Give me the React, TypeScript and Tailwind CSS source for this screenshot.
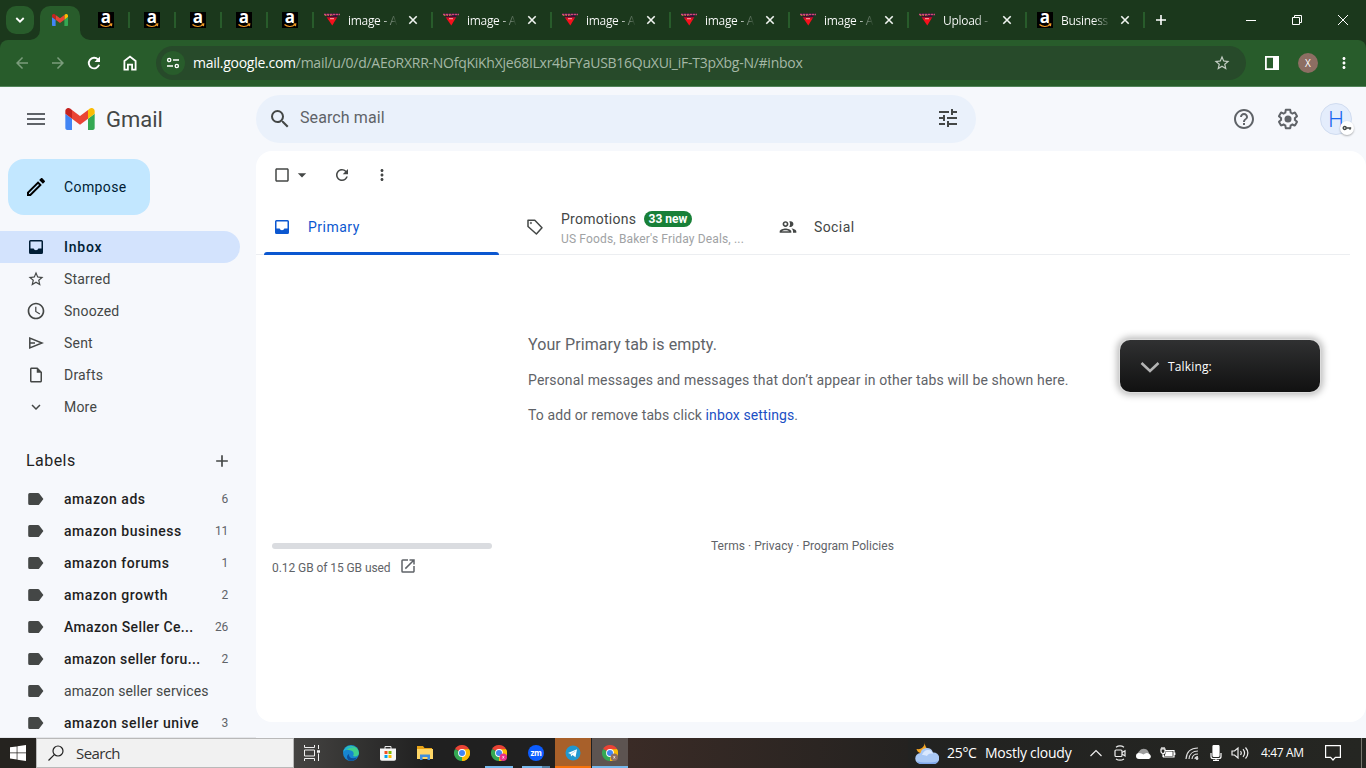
import type { ReactNode } from "react"
import {
  MdAccessTime,
  MdAdd,
  MdArrowBack,
  MdArrowDropDown,
  MdArrowForward,
  MdCheckBoxOutlineBlank,
  MdExpandMore,
  MdHelpOutline,
  MdMenu,
  MdMoreVert,
  MdOpenInNew,
  MdOutlineCreate,
  MdOutlineInsertDriveFile,
  MdOutlinePeople,
  MdRefresh,
  MdSearch,
  MdStarBorder,
  MdTune,
} from "react-icons/md"

const gmailFont = "font-['Roboto','Inter',sans-serif]"
const systemFont = "font-['Open_Sans','Noto_Sans',sans-serif]"

function GmailLogo({ className }: { className: string }) {
  return (
    <svg viewBox="52 42 88 66" className={className}>
      <path fill="#4285f4" d="M58 108h14V74L52 59v43c0 3.32 2.69 6 6 6" />
      <path fill="#34a853" d="M120 108h14c3.32 0 6-2.69 6-6V59l-20 15" />
      <path fill="#fbbc04" d="M120 48v26l20-15v-8c0-7.42-8.47-11.65-14.4-7.2" />
      <path fill="#ea4335" d="M72 74V48l24 18 24-18v26L96 92" />
      <path fill="#c5221f" d="M52 51v8l20 15V48l-5.6-4.2c-5.94-4.45-14.4-.22-14.4 7.2" />
    </svg>
  )
}

function AmazonIcon() {
  return (
    <span className="relative flex h-4 w-4 shrink-0 justify-center bg-black font-['Open_Sans',sans-serif] text-[17px] leading-[9px] font-bold text-white">
      a
      <svg viewBox="0 0 16 16" className="absolute inset-0 h-4 w-4" fill="none" stroke="#f59b23" strokeWidth="1.200">
        <path d="M2.500 12.500c3 2.600 7.500 2.600 10.500.3M11.500 12.200l2.200-.2-.3 2.100" />
      </svg>
    </span>
  )
}

function TriangleIcon() {
  return (
    <svg viewBox="0 0 16 16" className="h-4 w-4 shrink-0">
      <path fill="#1b1030" d="M1 1.500h14L10.500 9h-5z" />
      <path fill="none" stroke="#d0487a" strokeWidth="1.600" strokeDasharray="2.500 .5" d="M0 2.500h16" />
      <path fill="none" stroke="#c98a3a" strokeWidth=".8" strokeDasharray="1.500 1" d="M1 3.500h8" />
      <path fill="#a01030" d="M2.500 4.800h11l-1.300 2.500H3.800z" />
      <path fill="#f5101c" d="M3.500 6.500h9L8.300 13.500z" />
      <path fill="#ffb0b0" d="M6 6.200h4v1H6z" />
    </svg>
  )
}

function CloseIcon() {
  return (
    <svg viewBox="0 0 10 10" className="h-2.5 w-2.5 shrink-0" stroke="#f1f5f1" strokeWidth="1.600">
      <path d="M1.300 1.300l7.400 7.400M8.700 1.300L1.300 8.700" />
    </svg>
  )
}

const tabs = [
  { title: "image - A", icon: "triangle", width: "w-[119px]" },
  { title: "image - A", icon: "triangle", width: "w-[119px]" },
  { title: "image - A", icon: "triangle", width: "w-[119px]" },
  { title: "image - A", icon: "triangle", width: "w-[119px]" },
  { title: "image - A", icon: "triangle", width: "w-[119px]" },
  { title: "Upload -", icon: "triangle", width: "w-[118px]" },
  { title: "Business", icon: "amazon", width: "w-[118px]" },
]

function TabStrip() {
  return (
    <div className="flex h-10 bg-[#1b381c]">
      <div className="mt-1.5 ml-1.5 flex h-7 w-7 items-center justify-center rounded-[10px] bg-[#285c2b]">
        <svg viewBox="0 0 10 10" className="h-2.5 w-2.5" fill="none" stroke="#fff" strokeWidth="1.800">
          <path d="M1.300 3l3.700 3.700L8.700 3" />
        </svg>
      </div>
      <div className="relative mt-1.5 mr-1 ml-1.5 flex w-10 items-center justify-center rounded-t-[10px] bg-[#285c2b] pb-1.5">
        <GmailLogo className="h-3 w-4" />
        <svg viewBox="0 0 10 10" className="absolute bottom-0 -left-2.5 h-2.5 w-2.5" fill="#285c2b">
          <path d="M10 0v10H0A10 10 0 0 0 10 0z" />
        </svg>
        <svg viewBox="0 0 10 10" className="absolute -right-2.5 bottom-0 h-2.5 w-2.5" fill="#285c2b">
          <path d="M0 0v10h10A10 10 0 0 1 0 0z" />
        </svg>
      </div>
      {[0, 1, 2, 3, 4].map((i) => (
        <div key={i} className="flex w-[46px] items-center justify-between pl-3.5">
          <AmazonIcon />
          <span className="h-4 w-0.5 bg-[#285c2b]" />
        </div>
      ))}
      {tabs.map((tab, i) => (
        <div key={i} className={`flex items-center pl-2.5 ${tab.width}`}>
          {tab.icon === "amazon" ? <AmazonIcon /> : <TriangleIcon />}
          <span className="mt-0.5 ml-2 w-[50px] bg-linear-to-r from-white from-65% to-transparent to-100% bg-clip-text text-[12px] tracking-[-0.3px] whitespace-nowrap text-transparent">
            {tab.title}
          </span>
          <span className="mr-[13px] ml-auto">
            <CloseIcon />
          </span>
          <span className="h-4 w-0.5 bg-[#285c2b]" />
        </div>
      ))}
      <div className="flex w-8 items-center justify-center text-white">
        <svg viewBox="0 0 12 12" className="h-3 w-3" stroke="currentColor" strokeWidth="1.600">
          <path d="M6 1v10M1 6h10" />
        </svg>
      </div>
      <div className="ml-auto flex text-white">
        <div className="flex w-[46px] items-center justify-center">
          <span className="h-px w-2.5 bg-white" />
        </div>
        <div className="flex w-[46px] items-center justify-center">
          <svg viewBox="0 0 10 10" className="h-2.5 w-2.5" fill="none" stroke="currentColor">
            <path d="M.5 2.500h7v7h-7zM2.500 2.500v-2h7v7h-2" />
          </svg>
        </div>
        <div className="flex w-[46px] items-center justify-center">
          <svg viewBox="0 0 10 10" className="h-2.5 w-2.5" stroke="currentColor">
            <path d="M0 0l10 10M10 0L0 10" />
          </svg>
        </div>
      </div>
    </div>
  )
}

function AddressBar() {
  return (
    <div className="bg-[#1b381c]">
      <div className="flex h-[47px] items-center rounded-t-lg border-b border-[#52855a] bg-[#285c2b] text-white">
        <div className="ml-1 flex w-[144px]">
          <span className="flex w-9 justify-center">
            <MdArrowBack className="h-[18px] w-[18px] text-[#7b9c7c]" />
          </span>
          <span className="flex w-9 justify-center">
            <MdArrowForward className="h-[18px] w-[18px] text-[#7b9c7c]" />
          </span>
          <span className="flex w-9 justify-center">
            <svg viewBox="0 0 18 18" className="h-[18px] w-[18px]" fill="none" stroke="currentColor" strokeWidth="1.900">
              <path d="M14.100 10.800A5.300 5.300 0 1 1 13 5.500l1.300 1.300" />
              <path fill="currentColor" stroke="none" d="M15 2.500V8H9.500z" />
            </svg>
          </span>
          <span className="flex w-9 justify-center">
            <svg viewBox="0 0 18 18" className="h-[18px] w-[18px]" fill="none" stroke="currentColor" strokeWidth="1.800">
              <path d="M3.400 15.600V7L9 2.600 14.600 7v8.600h-3.500v-5H6.900v5z" />
            </svg>
          </span>
        </div>
        <div className="ml-2 flex h-[34px] w-[1090px] items-center rounded-full bg-[#274a2a] pl-[5px]">
          <span className="flex h-6 w-6 items-center justify-center rounded-full bg-[#285c2b]">
            <svg viewBox="0 0 14 14" className="h-3.5 w-3.5" fill="none" stroke="#fff" strokeWidth="1.400">
              <circle cx="3.200" cy="4" r="1.600" />
              <path d="M7 4h6M1 10h6" />
              <circle cx="10.800" cy="10" r="1.600" />
            </svg>
          </span>
          <span className="mb-0.5 ml-2 text-[14px] tracking-[-0.26px] whitespace-nowrap text-[#a5b8a6]">
            <span className="text-white">mail.google.com</span>
            /mail/u/0/d/AEoRXRR-NOfqKiKhXje68ILxr4bFYaUSB16QuXUi_iF-T3pXbg-N/#inbox
          </span>
          <MdStarBorder className="mr-[15px] ml-auto h-[18px] w-[18px] text-[#c3cdc3]" />
        </div>
        <svg viewBox="0 0 14 14" className="ml-[19px] h-3.5 w-3.5">
          <path fill="none" stroke="#fff" strokeWidth="1.800" d="M.9.900h12.200v12.200H.9z" />
          <path fill="#fff" d="M8 1h5v12H8z" />
        </svg>
        <span className="ml-[19px] flex h-5 w-5 items-center justify-center rounded-full bg-[#8d6e63] text-[10px]">X</span>
        <MdMoreVert className="ml-[17px] h-[18px] w-[18px]" />
      </div>
    </div>
  )
}

function Header() {
  return (
    <header className="flex h-16 items-center">
      <MdMenu className="ml-6 h-6 w-6 text-[#5f6368]" />
      <GmailLogo className="ml-[17px] h-[22px] w-[30px]" />
      <span className="mt-0.5 ml-[11px] w-[150px] text-[22px] leading-8 text-[#444746]">Gmail</span>
      <div className="flex h-12 w-[720px] items-center rounded-full bg-[#eaf1fb] text-[#444746]">
        <MdSearch className="ml-3 h-6 w-6" />
        <span className="mb-0.5 ml-2 text-base tracking-[0.1px] text-[#5f6368]">Search mail</span>
        <MdTune className="mr-4 mb-0.5 ml-auto h-6 w-6" />
      </div>
      <MdHelpOutline className="ml-64 h-6 w-6 text-[#5f6368]" />
      <svg viewBox="0 0 24 24" className="ml-5 h-6 w-6" fill="#5f6368">
        <path d="M13.850 22.250h-3.700c-.74 0-1.360-.54-1.450-1.270l-.27-1.890c-.27-.14-.53-.29-.79-.46l-1.800.72c-.7.260-1.470-.03-1.810-.65L2.200 15.530c-.35-.66-.2-1.440.36-1.880l1.530-1.190c-.01-.15-.02-.3-.02-.46 0-.15.010-.31.020-.46l-1.520-1.190c-.59-.45-.74-1.260-.37-1.880l1.850-3.190c.34-.62 1.110-.9 1.790-.63l1.810.730c.26-.17.520-.32.780-.46l.27-1.910c.09-.7.710-1.250 1.440-1.250h3.700c.74 0 1.360.54 1.450 1.270l.27 1.890c.27.140.530.290.790.460l1.800-.72c.71-.26 1.480.03 1.820.65l1.840 3.180c.36.660.2 1.440-.36 1.880l-1.520 1.190c.01.150.020.3.020.460s-.01.310-.02.460l1.520 1.190c.56.450.720 1.230.370 1.860l-1.860 3.220c-.34.620-1.110.9-1.800.630l-1.800-.72c-.26.170-.52.320-.78.460l-.27 1.910c-.1.680-.72 1.220-1.460 1.220zm-3.230-2h2.760l.37-2.550.53-.22c.44-.18.880-.44 1.340-.78l.45-.34 2.380.96 1.380-2.400-2.030-1.580.07-.56c.03-.26.060-.51.060-.78s-.03-.53-.06-.78l-.07-.56 2.030-1.580-1.390-2.400-2.390.96-.45-.35c-.42-.32-.87-.58-1.330-.77l-.52-.22-.37-2.550h-2.760l-.37 2.550-.53.210c-.44.190-.88.440-1.340.790l-.45.330-2.380-.95-1.390 2.390 2.030 1.580-.07.560a7 7 0 0 0-.06.790c0 .26.020.53.060.780l.07.560-2.030 1.580 1.380 2.400 2.390-.96.450.35c.43.330.860.580 1.330.770l.53.220.38 2.550z" />
        <circle cx="12" cy="12" r="3.500" />
      </svg>
      <div className="relative ml-5 flex h-8 w-8 items-center justify-center rounded-full border border-[#d0dcf0] bg-[#e4edfc] text-[22px] font-light text-[#1a66f0]">
        H
        <span className="absolute top-[17px] left-[19px] flex h-3.5 w-3.5 items-center justify-center rounded-full bg-white shadow-[0_1px_2px_rgba(0,0,0,0.3)]">
          <svg viewBox="0 0 10 6" className="h-1.5 w-2.5" fill="none" stroke="#444746" strokeWidth="1.400">
            <circle cx="2.700" cy="3" r="1.500" />
            <path d="M4.200 3h5M8 3v1.800" />
          </svg>
        </span>
      </div>
    </header>
  )
}

function InboxIcon() {
  return (
    <svg viewBox="0 0 20 20" className="h-5 w-5 shrink-0" fill="currentColor">
      <path
        fillRule="evenodd"
        d="M4.500 3h11A1.500 1.500 0 0 1 17 4.500v11a1.500 1.500 0 0 1-1.500 1.500h-11A1.500 1.500 0 0 1 3 15.500v-11A1.500 1.500 0 0 1 4.500 3zm0 1.500v7h3.200c.3 1 1.200 1.700 2.300 1.700s2-.7 2.300-1.700h3.200v-7z"
      />
    </svg>
  )
}

function LabelIcon() {
  return (
    <svg viewBox="0 0 20 20" className="h-5 w-5 shrink-0" fill="#444746">
      <path d="M3.700 4H12c.5 0 .9.200 1.200.6L17.400 10l-4.200 5.400c-.3.400-.7.600-1.200.6H3.700A1.500 1.500 0 0 1 2.200 14.500v-9A1.500 1.500 0 0 1 3.700 4z" />
    </svg>
  )
}

function NavItem({ icon, text, active }: { icon: ReactNode; text: string; active?: boolean }) {
  return (
    <div
      className={`flex h-8 w-60 items-center rounded-r-full pl-[26px] text-sm ${
        active ? "bg-[#d3e3fd] font-medium tracking-[0.75px] text-[#001d35]" : "tracking-[0.2px] text-[#444746]"
      }`}
    >
      {icon}
      <span className="ml-[18px]">{text}</span>
    </div>
  )
}

const labels = [
  { name: "amazon ads", count: "6" },
  { name: "amazon business", count: "11" },
  { name: "amazon forums", count: "1" },
  { name: "amazon growth", count: "2" },
  { name: "Amazon Seller Ce...", count: "26" },
  { name: "amazon seller foru...", count: "2" },
  { name: "amazon seller services", count: "" },
  { name: "amazon seller unive", count: "3" },
]

function Sidebar() {
  return (
    <aside className="flex h-[587px] w-64 shrink-0 flex-col overflow-hidden border-b border-[#e4e6ea]">
      <div className="mt-2 ml-2 flex h-14 w-[142px] shrink-0 items-center rounded-2xl bg-[#c2e7ff] pl-4 text-sm tracking-[0.4px] text-[#001d35]">
        <MdOutlineCreate className="h-6 w-6 text-black" />
        <span className="ml-4">Compose</span>
      </div>
      <nav className="mt-4">
        <NavItem active icon={<InboxIcon />} text="Inbox" />
        <NavItem icon={<MdStarBorder className="h-[18px] w-5" />} text="Starred" />
        <NavItem icon={<MdAccessTime className="h-5 w-5" />} text="Snoozed" />
        <NavItem
          icon={
            <svg viewBox="0 0 20 20" className="h-5 w-5" fill="none" stroke="currentColor" strokeWidth="1.500">
              <path d="M3.800 5v10L16 10zM4 10h5" />
            </svg>
          }
          text="Sent"
        />
        <NavItem icon={<MdOutlineInsertDriveFile className="h-[18px] w-5" />} text="Drafts" />
        <NavItem icon={<MdExpandMore className="h-[18px] w-5" />} text="More" />
      </nav>
      <div className="mt-[19px] mb-[3px] flex h-[38px] shrink-0 items-center pr-6 pl-[26px] text-[#1f1f1f]">
        <span className="mb-px text-base tracking-[0.45px]">Labels</span>
        <MdAdd className="ml-auto h-5 w-5 text-[#444746]" />
      </div>
      {labels.map((label) => (
        <div key={label.name} className="flex h-8 shrink-0 items-center pr-7 pl-[26px] text-sm">
          <LabelIcon />
          <span
            className={`ml-[18px] whitespace-nowrap ${
              label.name.endsWith("...")
                ? "font-medium tracking-[0.38px] text-[#1f1f1f]"
                : label.count
                  ? "font-medium tracking-[0.55px] text-[#1f1f1f]"
                  : "tracking-[0.1px] text-[#444746]"
            }`}
          >
            {label.name}
          </span>
          <span className="ml-auto text-xs tracking-[-0.2px] text-[#5f6368]">{label.count}</span>
        </div>
      ))}
    </aside>
  )
}

function CategoryTabs() {
  return (
    <div className="mr-4 flex h-14 border-b border-[#eceef1] text-sm text-[#444746]">
      <div className="relative flex w-[253px] items-center pl-4 tracking-[0.5px] text-[#0b57d0]">
        <InboxIcon />
        <span className="ml-4">Primary</span>
        <span className="absolute -bottom-px left-2 h-[3px] w-[235px] rounded-t-sm bg-[#0b57d0]" />
      </div>
      <div className="flex w-[253px] items-center pl-4">
        <svg viewBox="0 0 20 20" className="h-5 w-5 shrink-0" fill="none" stroke="currentColor" strokeWidth="1.500">
          <path d="M3 3.300h6.800l7.200 7.400-5.600 6.300L3 9.500z" strokeLinejoin="round" />
          <circle cx="5.900" cy="6" r=".8" fill="currentColor" strokeWidth=".5" />
        </svg>
        <div className="mt-1 ml-4 flex w-[186px] flex-col">
          <div className="flex h-5 items-center">
            <span className="w-[75px] tracking-[0.25px]">Promotions</span>
            <span className="ml-2 flex h-4 w-12 items-center justify-center rounded-full bg-[#188038] text-xs font-bold text-white">
              33 new
            </span>
          </div>
          <span className="h-5 text-xs leading-5 tracking-[0.15px] whitespace-nowrap text-[#a0a2a4]">
            US Foods, Baker&apos;s Friday Deals, ...
          </span>
        </div>
      </div>
      <div className="flex items-center pl-4">
        <MdOutlinePeople className="h-5 w-5" />
        <span className="ml-4 tracking-[0.4px]">Social</span>
      </div>
    </div>
  )
}

function MailPanel() {
  return (
    <main className="relative h-[571px] flex-1 rounded-2xl bg-white">
      <div className="flex h-12 items-center text-[#444746]">
        <MdCheckBoxOutlineBlank className="ml-4 h-[18px] w-5" />
        <MdArrowDropDown className="h-5 w-5" />
        <MdRefresh className="ml-5 h-[18px] w-5" />
        <MdMoreVert className="ml-5 h-[18px] w-5" />
      </div>
      <CategoryTabs />
      <div className="mt-[78px] ml-[272px] text-sm text-[#5f6368]">
        <p className="text-base leading-6 tracking-[0.1px]">Your Primary tab is empty.</p>
        <p className="mt-[13px] leading-5 tracking-[0.145px]">
          Personal messages and messages that don’t appear in other tabs will be shown here.
        </p>
        <p className="mt-[15px] leading-5 tracking-[0.1px]">
          To add or remove tabs click <span className="text-[#1a4fc4]">inbox settings</span>.
        </p>
      </div>
      <footer className="mt-[111px] flex pl-4 text-xs text-[#5f6368]">
        <div className="w-[220px] pt-[7px]">
          <div className="h-1.5 rounded-full bg-[#dadce0]" />
          <div className="mt-[7px] flex items-center">
            <span className="mt-1 w-[119px] tracking-[-0.07px] whitespace-nowrap">0.12 GB of 15 GB used</span>
            <MdOpenInNew className="ml-2 h-[18px] w-[18px]" />
          </div>
        </div>
        <p className="ml-[219px] pt-0.5 tracking-[0.04px]">Terms · Privacy · Program Policies</p>
      </footer>
      <div
        className={`absolute top-[189px] left-[864px] flex h-[52px] w-[200px] items-center rounded-[10px] bg-linear-to-b from-[#303132] to-[#111] pl-5 text-white shadow-[0_0_0_1px_#dcdcdc,0_0_7px_3px_rgba(0,0,0,0.28)] ${systemFont}`}
      >
        <svg viewBox="0 0 20 12" className="mt-0.5 h-3 w-5" fill="none" stroke="#b4b4b4" strokeWidth="2.500">
          <path d="M1.500 2L10 10l8.500-8" />
        </svg>
        <span className="mt-px ml-2 text-xs tracking-[0.15px]">Talking:</span>
      </div>
    </main>
  )
}

function ChromeIcon({ badge }: { badge?: string }) {
  return (
    <svg viewBox="0 0 16 16" className="h-4 w-4">
      <path fill="#ea4335" d="M8 8L1.070 4A8 8 0 0 1 14.930 4z" />
      <path fill="#fbbc04" d="M8 8l6.930-4A8 8 0 0 1 8 16z" />
      <path fill="#34a853" d="M8 8v8A8 8 0 0 1 1.070 4z" />
      <path fill="#fbbc04" d="M8 4.200h7a8 8 0 0 1-7 11.800l3.300-6z" />
      <circle cx="8" cy="8" r="3.900" fill="#fff" />
      <circle cx="8" cy="8" r="3" fill="#4285f4" />
      {badge && <circle cx="12.300" cy="12.300" r="3.700" fill={badge} />}
      {badge && <path stroke="#fff" strokeOpacity=".7" strokeWidth=".9" d="M11.500 11l1.600 2.600M13.100 11l-1.600 2.600" />}
    </svg>
  )
}

function TaskCell({ children, className = "" }: { children: ReactNode; className?: string }) {
  return <div className={`flex h-full w-9 items-center justify-center ${className}`}>{children}</div>
}

function TrayCell({ children }: { children: ReactNode }) {
  return <div className="flex w-6 justify-center">{children}</div>
}

function Taskbar() {
  return (
    <div
      className={`flex h-[30px] items-center bg-linear-to-r from-[#25231f] from-0% via-[#202020] via-45% to-[#252622] text-white ${systemFont}`}
    >
      <div className="flex w-9 justify-center">
        <svg viewBox="0 0 16 16" className="h-4 w-4" fill="#fff">
          <path d="M0 2.300l6.700-.9v6.200H0zM7.400 1.300L16 0v7.600H7.400zM0 8.300h6.700v6.200L0 13.600zM7.400 8.300H16V16l-8.600-1.300z" />
        </svg>
      </div>
      <div className="flex h-full w-[258px] items-center border border-[#b9b9b9] bg-[#f1f1f1] pl-[11px] text-[#333]">
        <svg viewBox="0 0 16 16" className="h-4 w-4" fill="none" stroke="#222" strokeWidth="1.200">
          <circle cx="10" cy="6" r="5" />
          <path d="M6.300 9.700L.5 15.500" />
        </svg>
        <span className="ml-3 text-[15px] tracking-[-0.6px]">Search</span>
      </div>
      <div className="flex h-full gap-px bg-linear-to-r from-[#454442] to-[#202020] to-40%">
        <TaskCell className="mr-0.5">
          <svg viewBox="0 0 16 16" className="h-4 w-4" fill="none" stroke="#f0f0f0">
            <path d="M.5 0v2.500h10V0M.5 5h10v6H.5zM.5 16v-2.500h10V16M14.500 0v4M14.500 8.500V16" />
            <path d="M13 6.500h3" strokeWidth="2.500" />
          </svg>
        </TaskCell>
        <TaskCell>
          <svg viewBox="0 0 16 16" className="h-4 w-4">
            <circle cx="8" cy="8" r="8" fill="#1785cf" />
            <path fill="#3fcf8e" d="M1 5A8 8 0 0 1 16 8c0 3-3.500 4-6 3 1.500-2 .5-5-2-5.500C5.500 4.500 2.500 4.500 1 5z" />
            <path fill="#1fb0dc" d="M.6 5.500C3 1 8 .5 11 3c-3-.5-6 0-7 1.500C2.600 5 1.300 6 .2 7z" />
            <path fill="#0c4f9c" d="M6 9c-.5 3 2 5.500 8 3.500C12.500 15 9.500 16 7 15.800 3.500 14.500 3 10.500 6 9z" />
          </svg>
        </TaskCell>
        <TaskCell>
          <svg viewBox="0 0 16 16" className="h-4 w-4">
            <path fill="none" stroke="#e8e8e8" d="M5 4V1.500h6V4" />
            <path fill="#f7f7f7" d="M0 3.500h16V14a1.800 1.800 0 0 1-1.800 1.800H1.800A1.800 1.800 0 0 1 0 14z" />
            <path fill="#f25022" d="M4.500 6h3v3h-3z" />
            <path fill="#7fba00" d="M8.500 6h3v3h-3z" />
            <path fill="#00a4ef" d="M4.500 10h3v3h-3z" />
            <path fill="#ffb900" d="M8.500 10h3v3h-3z" />
          </svg>
        </TaskCell>
        <TaskCell>
          <svg viewBox="0 0 16 16" className="h-4 w-4">
            <path fill="#e8a317" d="M0 1h6l1.500 2H15v3H0z" />
            <path fill="#ffd767" d="M0 4h16v10H0z" />
            <path fill="#3f8fdc" d="M3 9.500h10V15h-2.500v-3h-5v3H3z" />
          </svg>
        </TaskCell>
        <TaskCell>
          <ChromeIcon />
        </TaskCell>
        <TaskCell className="relative">
          <ChromeIcon badge="#e8308a" />
          <span className="absolute bottom-0 h-0.5 w-7 bg-[#76b9ed]" />
        </TaskCell>
        <TaskCell className="relative">
          <span className="flex h-4 w-4 items-center justify-center rounded-full bg-[#0b5cff] text-[8px] leading-none font-bold tracking-[-0.3px]">
            zm
          </span>
          <span className="absolute bottom-0 h-0.5 w-7 border-r-8 border-[#5180a4] bg-[#76b9ed]" />
        </TaskCell>
        <TaskCell className="border-b-2 border-[#f7720b] bg-[#a8602a] pt-0.5">
          <svg viewBox="0 0 16 16" className="h-4 w-4">
            <circle cx="8" cy="8" r="7.500" fill="#2197cf" />
            <path fill="#fff" d="M3 8l9-3.700-1.500 8-3-2.200-1.500 1.400-.3-2.500z" />
            <path stroke="#9fcde3" strokeWidth=".8" d="M6 9l4.500-3" />
          </svg>
        </TaskCell>
        <TaskCell className="border-b-2 border-[#76b9ed] bg-[#5d5451] pt-0.5">
          <ChromeIcon badge="#8d6e63" />
        </TaskCell>
      </div>
      <div className="h-full w-[280px] bg-linear-to-r from-[#3a2b26] to-[#242220]" />
      <svg viewBox="0 0 24 24" className="ml-[7px] h-6 w-6">
        <path fill="#f5a623" d="M10 0c-1 5 2 9 7 9-2 4-8 6-12 3-2-1-3-2-3.500-4C7 9 10 5 10 0z" />
        <path fill="#a9c8f5" d="M6 23a5.500 5.500 0 0 1-.5-11A6.500 6.500 0 0 1 18 11.500 5.500 5.500 0 0 1 19 23z" />
        <path fill="#7fa8ec" d="M2 20c3 2 17 2 21 0-1 2-2.500 3-4 3H6c-1.500 0-3-1-4-3z" />
        <path fill="#d9e8ff" d="M7 14c1-3 3-5 6-5s4.500 2 5 4c-3-1-5 0-6 2-2-1-3.500-1-5-1z" />
      </svg>
      <span className="ml-2 w-[38px] text-sm tracking-[-0.3px]">25°C</span>
      <span className="w-[99px] text-sm tracking-[-0.25px] whitespace-nowrap">Mostly cloudy</span>
      <TrayCell>
        <svg viewBox="0 0 12 8" className="h-2 w-3" fill="none" stroke="#eee" strokeWidth="1.200">
          <path d="M.5 7L6 1.500 11.500 7" />
        </svg>
      </TrayCell>
      <TrayCell>
        <svg viewBox="0 0 16 16" className="h-4 w-4" fill="none" stroke="#eee" strokeWidth="1.200">
          <rect x="3" y="5" width="7" height="6.500" rx="1" />
          <path d="M10 7.500l3-1.800v5.200l-3-1.800M4 2.200c2.500-1.600 5.500-1.600 8 0M4 13.900c2.500 1.600 5.500 1.600 8 0" />
        </svg>
      </TrayCell>
      <TrayCell>
        <svg viewBox="0 0 16 11" className="h-[11px] w-4">
          <path fill="#9d9d9d" d="M3 8a3 3 0 0 1 .5-5A5 5 0 0 1 12 3l2 4z" />
          <path fill="#fff" d="M3 11a3 3 0 0 1 0-6c2 0 3 .8 4.500 1.500C9 5 11.500 4 13 6a2.600 2.600 0 0 1 0 5z" />
        </svg>
      </TrayCell>
      <TrayCell>
        <svg viewBox="0 0 16 14" className="h-3.5 w-4" fill="none" stroke="#fff" strokeWidth="1.200">
          <path d="M5.500 4.500H14v6.500H3.500V9M14.800 6.500v2.500M1 3h4v2.500a2 2 0 0 1-4 0zM2 3V1M4 3V1M3 7.500V11" />
          <path fill="#fff" d="M6.500 6H12v3.500H5.500z" />
        </svg>
      </TrayCell>
      <TrayCell>
        <svg viewBox="0 0 14 14" className="h-3.5 w-3.5" fill="none" stroke="#ddd" strokeWidth="1.200">
          <path d="M1 13C1.500 6 6 2 13 2M4 13c.3-4.500 3.500-8 9-8M7 13c.2-3 2.500-5 6-5M10 13c0-1.500 1-2.300 3-2.500" />
          <circle cx="12" cy="12.500" r=".8" fill="#fff" />
        </svg>
      </TrayCell>
      <TrayCell>
        <svg viewBox="0 0 12 16" className="h-4 w-3" fill="none" stroke="#fff" strokeWidth="1.200">
          <rect x="3" y=".5" width="6" height="11" rx="1" fill="#fff" />
          <path d="M1 8v3.500c0 1 1 2 2 2h6c1 0 2-1 2-2V8M6 13v2.500M3 15.400h6" />
        </svg>
      </TrayCell>
      <TrayCell>
        <svg viewBox="0 0 18 14" className="h-3.5 w-[18px]" fill="none" stroke="#eee" strokeWidth="1.200">
          <path d="M1 5h2.500L7 2v10L3.500 9H1zM9.500 5c1 1.300 1 2.700 0 4M12 3.200c2 2.400 2 5.200 0 7.600M14.500 1.500c3 3.500 3 7.500 0 11" />
        </svg>
      </TrayCell>
      <span className="ml-[9px] w-[52px] text-xs tracking-[-0.35px] whitespace-nowrap">4:47 AM</span>
      <svg viewBox="0 0 16 16" className="ml-3 h-4 w-4" fill="none" stroke="#fff" strokeWidth="1.200">
        <path d="M.6.600h14.800v11.800h-5L8 15l-2.400-2.600h-5z" />
      </svg>
      <span className="ml-auto h-full w-px bg-[#77776f]" />
      <span className="h-full w-1" />
    </div>
  )
}

export default function App() {
  return (
    <div className="h-[768px] w-[1366px] overflow-hidden bg-[#f6f8fc]">
      <div className={systemFont}>
        <TabStrip />
        <AddressBar />
      </div>
      <div className={gmailFont}>
        <Header />
        <div className="flex h-[587px]">
          <Sidebar />
          <MailPanel />
        </div>
      </div>
      <Taskbar />
    </div>
  )
}
